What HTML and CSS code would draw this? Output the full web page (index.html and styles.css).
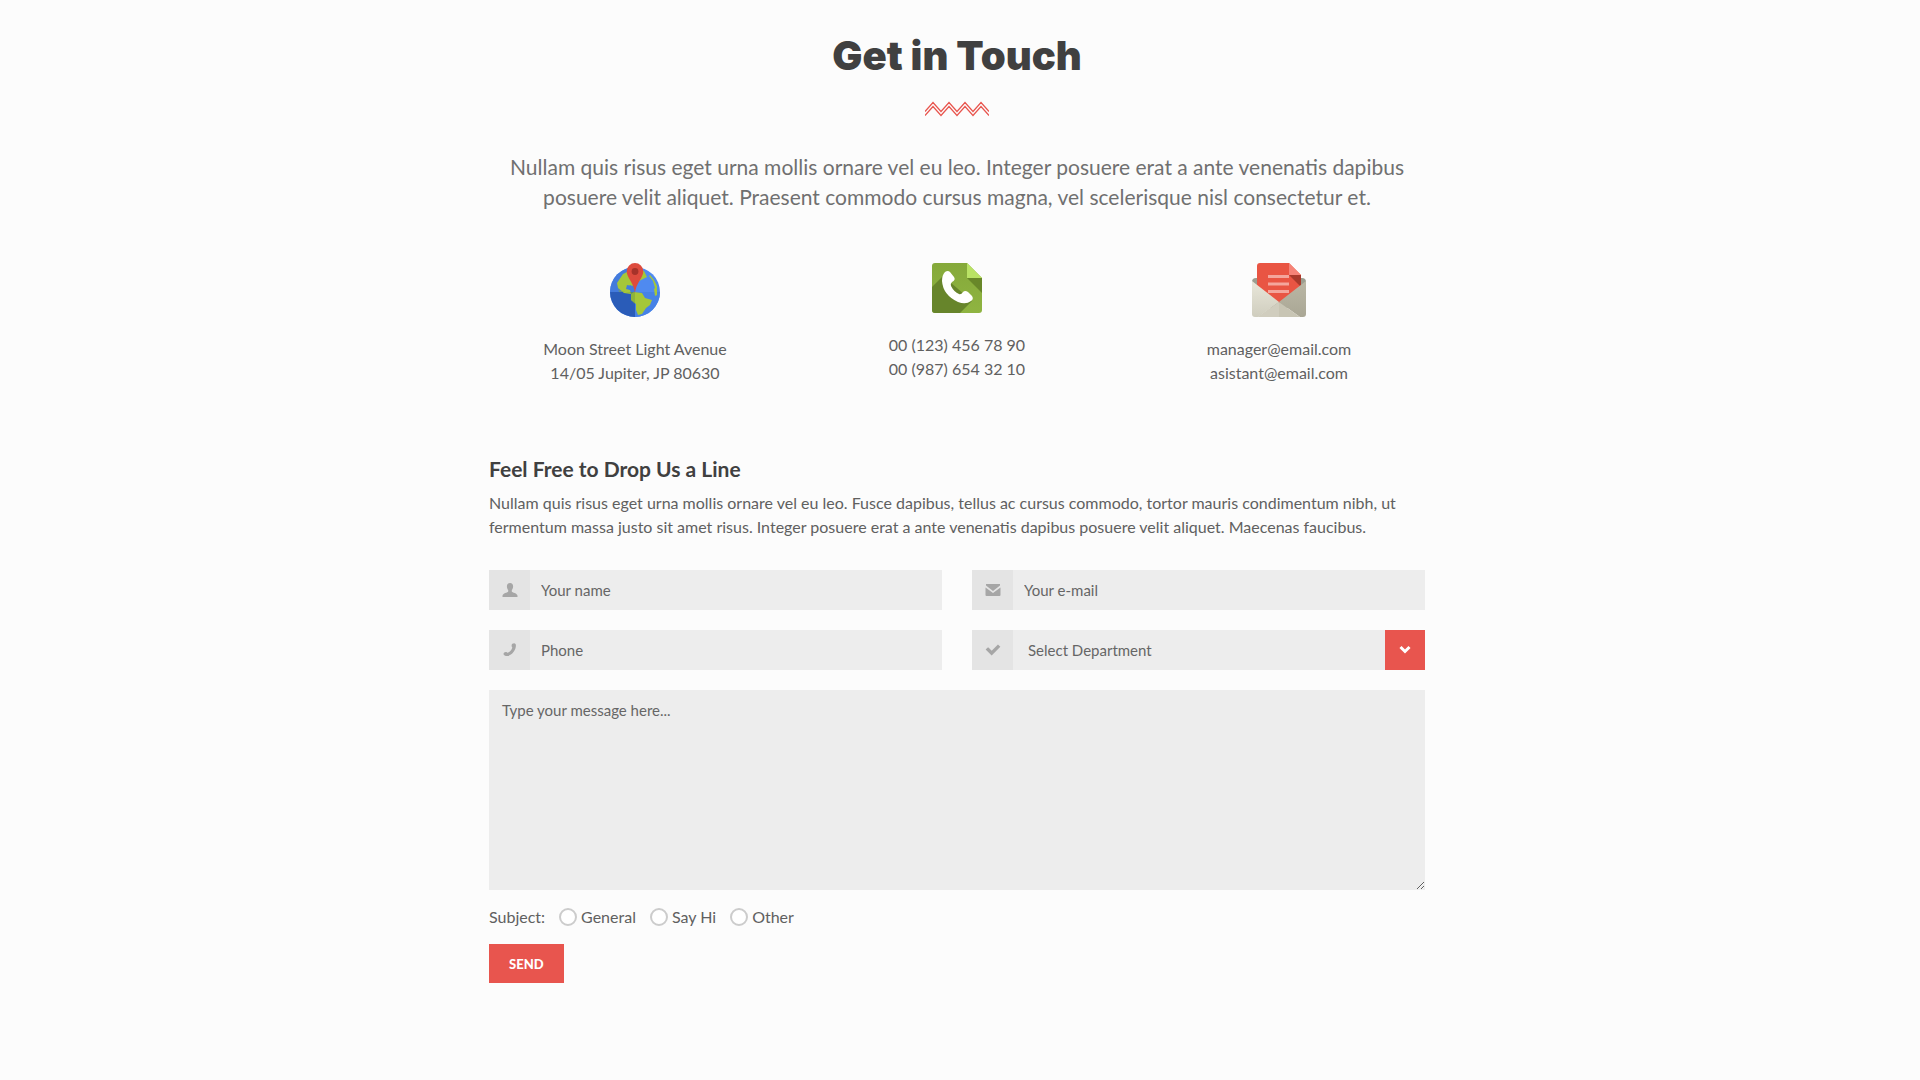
FILE: index.html
```html
<!DOCTYPE html>
<html lang="en">
<head>
<meta charset="utf-8">
<meta name="viewport" content="width=device-width, initial-scale=1">
<title>Get in Touch</title>
<link rel="stylesheet" href="styles.css">
</head>
<body>
<main class="contact">
  <header class="intro">
    <h1 class="intro-title">Get in Touch</h1>
    <svg class="zigzag" width="64" height="16" viewBox="0 0 64 16" aria-hidden="true">
      <path d="M0 10.500L8 1.500L16 10.500L24 1.500L32 10.500L40 1.500L48 10.500L56 1.500L64 10.500M0 14.500L8 5.500L16 14.500L24 5.500L32 14.500L40 5.500L48 14.500L56 5.500L64 14.500" fill="none" stroke="#e8554e" stroke-width="1.200"/>
    </svg>
    <p class="intro-text">Nullam quis risus eget urna mollis ornare vel eu leo. Integer posuere erat a ante venenatis dapibus posuere velit aliquet. Praesent commodo cursus magna, vel scelerisque nisl consectetur et.</p>
  </header>

  <section class="details">
    <div class="detail">
      <svg width="50" height="54" viewBox="0 0 50 54" aria-hidden="true">
        <defs><clipPath id="globe"><circle cx="25" cy="29" r="25"/></clipPath></defs>
        <g clip-path="url(#globe)">
          <path d="M0 4h50v50H0z" fill="#4f8af0"/>
          <path d="M25 29h25v25H25z" fill="#4682e6"/>
          <path d="M0 4h25v25H0z" fill="#437bdc"/>
          <path d="M0 29h25v25H0z" fill="#2a5cb8"/>
          <path d="M19 8l-6 3-6 9 1 5 6 5 7 1-1-4-4-1 1-4 5 1 9-6 6-3-3-6-5-2z" fill="#a5c739"/>
          <path d="M17 24l4-2 3 6-4-1z" fill="#3f7de0"/>
          <path d="M21 31l3-2 8 1 3 5 7 2-2 5-4 3-4 6-4 1-2-5v-6l-5-4z" fill="#a5c739"/>
          <path d="M8 25l2 3 11 2v7l4 4V29H9z" fill="#7fa63d" opacity=".6"/>
          <path d="M40 12l4 5 3 6v9l-2 1-1-7 1-1-2-7-4-5z" fill="#a5c739"/>
        </g>
        <path d="M25 0a8.300 8.300 0 0 0-8.300 8.300C16.700 15 24 20 25 30c1-10 8.300-15 8.300-21.700A8.300 8.300 0 0 0 25 0z" fill="#dd4b3e"/>
        <circle cx="25" cy="8.500" r="3.400" fill="#a6322a"/>
      </svg>
      <address>Moon Street Light Avenue<br>14/05 Jupiter, JP 80630</address>
    </div>
    <div class="detail">
      <svg width="50" height="50" viewBox="0 0 50 50" aria-hidden="true">
        <defs><linearGradient id="leaf" x1="0" y1="0" x2="0" y2="1"><stop offset="0" stop-color="#85a93a"/><stop offset="1" stop-color="#8fb441"/></linearGradient></defs>
        <path d="M3 0h32l15 15v32a3 3 0 0 1-3 3H3a3 3 0 0 1-3-3V3a3 3 0 0 1 3-3z" fill="url(#leaf)"/>
        <path d="M11 13L0 24v23a3 3 0 0 0 3 3h25l12-12z" fill="#67852b"/>
        <path d="M35 15h15v15z" fill="#688729"/>
        <path d="M35 0l15 15H35z" fill="#b9e265"/>
        <path d="M13 9q3-2 5 0l4 5q2 3-2 5-2 2-1 4 3 6 8 8 2 1 4-2 2-2 5 0l4 4q2 3-1 5-5 4-13 1Q11 32 10 18q0-6 3-9z" fill="#fff"/>
      </svg>
      <p>00 (123) 456 78 90<br>00 (987) 654 32 10</p>
    </div>
    <div class="detail">
      <svg width="54" height="54" viewBox="0 0 54 54" aria-hidden="true">
        <defs>
          <linearGradient id="flap" x1="0" y1="0" x2="0" y2="1"><stop offset="0" stop-color="#e9e7da"/><stop offset="1" stop-color="#cfcdbe"/></linearGradient>
          <linearGradient id="side" x1="0" y1="0" x2="0" y2="1"><stop offset="0" stop-color="#bab7a5"/><stop offset="1" stop-color="#aaa795"/></linearGradient>
        </defs>
        <rect y="15" width="54" height="30" rx="4" fill="#9c9e90"/>
        <path d="M8 0h29l12 12v28H5V3a3 3 0 0 1 3-3z" fill="#e95543"/>
        <path d="M37 12h12v12z" fill="#a93a2c"/>
        <path d="M37 0l12 12H37z" fill="#f58377"/>
        <path d="M16 12h21v3H16zM16 19.500h21v3H16zM16 27h21v3H16z" fill="#f4a69c"/>
        <path d="M0 18l27 21L6 54H3a3 3 0 0 1-3-3z" fill="url(#flap)"/>
        <path d="M54 18L27 39l21 15h3a3 3 0 0 0 3-3z" fill="url(#side)"/>
        <path d="M27 39L6 54h42z" fill="#c8c5b4"/>
        <path d="M27 39L6 54h21z" fill="#d0cdbe"/>
      </svg>
      <p>manager@email.com<br>asistant@email.com</p>
    </div>
  </section>

  <form class="form">
    <h2 class="form-title">Feel Free to Drop Us a Line</h2>
    <p class="form-text">Nullam quis risus eget urna mollis ornare vel eu leo. Fusce dapibus, tellus ac cursus commodo, tortor mauris condimentum nibh, ut fermentum massa justo sit amet risus. Integer posuere erat a ante venenatis dapibus posuere velit aliquet. Maecenas faucibus.</p>

    <div class="fields">
      <div class="field">
        <label class="field-icon" for="name" aria-label="Your name">
          <svg width="16" height="16" viewBox="0 0 16 16"><path d="M8 1C5.800 1 4.800 2.400 4.900 4.500c.1 1.700.6 2.800 1.300 3.500v1.500c-.3 1.200-5.700 1.600-5.700 4.300V15h15v-1.200c0-2.700-5.400-3.100-5.700-4.300V8c.7-.7 1.200-1.800 1.300-3.500C11.200 2.400 10.200 1 8 1z"/></svg>
        </label>
        <input class="control" id="name" type="text" placeholder="Your name">
      </div>
      <div class="field">
        <label class="field-icon" for="email" aria-label="Your e-mail">
          <svg width="16" height="16" viewBox="0 0 16 16"><path d="M1 2h14v1.500L8 9 1 3.500zM.5 5.500L8 11l7.500-5.500V13a1 1 0 0 1-1 1h-13a1 1 0 0 1-1-1z"/></svg>
        </label>
        <input class="control" id="email" type="email" placeholder="Your e-mail">
      </div>
      <div class="field">
        <label class="field-icon" for="phone" aria-label="Phone">
          <svg width="16" height="16" viewBox="0 0 16 16"><path d="M10.300 1.800q2.200-1.500 3.400.4c1.300 4.800-3.700 11.600-8.700 11.900-1.200.1-3.200-.5-3.500-2 0-1.700 1.700-2.500 2.900-2.100.8.300 1 .9 1.500.7C8 9.700 10 7.500 10.300 5.500c-.9-.9-1-2.700 0-3.700z"/></svg>
        </label>
        <input class="control" id="phone" type="tel" placeholder="Phone">
      </div>
      <div class="field">
        <label class="field-icon" for="department" aria-label="Department">
          <svg width="16" height="16" viewBox="0 0 16 16"><path d="M2.500 7.500L6.500 11.500L13.500 4.500" fill="none" stroke="#a6a6a6" stroke-width="3.800" stroke-linecap="square" transform="translate(.8 .8) scale(.9)"/></svg>
        </label>
        <select class="control control-select" id="department"><option>Select Department</option></select>
        <span class="select-arrow" aria-hidden="true">
          <svg width="12" height="12" viewBox="0 0 12 12"><path d="M1.500 3L6 7.500 10.500 3" fill="none" stroke="#fff" stroke-width="3"/></svg>
        </span>
      </div>
    </div>

    <textarea class="message" aria-label="Message" placeholder="Type your message here..."></textarea>

    <div class="subject" role="radiogroup" aria-labelledby="subject-label">
      <span id="subject-label">Subject:</span>
      <label class="choice"><input type="radio" name="subject">General</label>
      <label class="choice"><input type="radio" name="subject">Say Hi</label>
      <label class="choice"><input type="radio" name="subject">Other</label>
    </div>
    <button class="send" type="submit">SEND</button>
  </form>
</main>
</body>
</html>
```
FILE: styles.css
```css
* {
  box-sizing: border-box;
}

body {
  margin: 0;
  padding: 32px 22px 96px 16px;
  background: #fcfcfc;
  color: #606060;
  font: 16px/24px Lato, sans-serif;
}

h1, h2, p, address {
  margin: 0;
  font-style: normal;
}

.contact {
  max-width: 936px;
  margin: 0 auto;
}

.intro {
  display: flex;
  flex-direction: column;
  align-items: center;
  text-align: center;
}

.intro-title {
  color: #404040;
  font-family: Inter, sans-serif;
  font-size: 40px;
  font-weight: 900;
  line-height: 48px;
}

.zigzag {
  margin: 21px 0 35px;
}

.intro-text {
  color: #707070;
  font-size: 21px;
  line-height: 30px;
}

.details {
  display: grid;
  grid-template-columns: repeat(3, 1fr);
  gap: 30px;
  margin-top: 51px;
}

.detail {
  display: flex;
  flex-direction: column;
  align-items: center;
  gap: 20px;
  text-align: center;
}

.form {
  margin-top: 69px;
}

.form-title {
  color: #404040;
  font-size: 21px;
  font-weight: 700;
  line-height: 30px;
}

.form-text {
  margin: 7px 0 31px;
}

.fields {
  display: grid;
  grid-template-columns: repeat(2, 1fr);
  gap: 20px 30px;
}

.field {
  position: relative;
  display: flex;
  height: 40px;
}

.field-icon {
  display: flex;
  flex: 0 0 41px;
  align-items: center;
  justify-content: center;
  background: #e4e4e4;
  fill: #a6a6a6;
}

.control,
.message {
  margin: 0;
  border: 0;
  border-radius: 0;
  background: #ededed;
  color: #666;
  font: 15px/20px Lato, sans-serif;
}

.control {
  flex: 1;
  min-width: 0;
  padding: 0 11px;
}

.control-select {
  padding: 0 52px 0 15px;
  appearance: none;
}

.select-arrow {
  position: absolute;
  top: 0;
  right: 0;
  display: flex;
  align-items: center;
  justify-content: center;
  width: 40px;
  height: 40px;
  background: #e8554e;
  pointer-events: none;
}

.message {
  display: block;
  width: 100%;
  height: 200px;
  margin-top: 20px;
  padding: 10px 13px;
  resize: vertical;
}

.control::placeholder,
.message::placeholder {
  color: #666;
  opacity: 1;
}

.subject {
  display: flex;
  flex-wrap: wrap;
  gap: 14px;
  margin: 15px 0;
}

.choice {
  display: flex;
  align-items: center;
  gap: 4px;
}

.choice input {
  width: 18px;
  height: 18px;
  margin: 0;
  border: 2px solid #ccc;
  border-radius: 50%;
  background: #fff;
  appearance: none;
}

.choice input:checked {
  border-color: #e8554e;
}

.send {
  height: 39px;
  padding: 0 20px;
  border: 0;
  background: #e8554e;
  color: #fff;
  font: 900 13px/20px Lato, sans-serif;
}
```
